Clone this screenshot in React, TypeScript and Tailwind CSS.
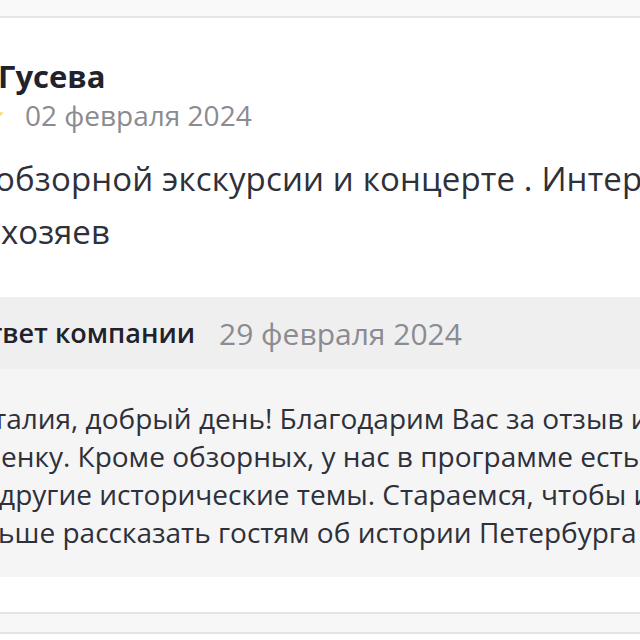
const font = { fontFamily: '"Open Sans", "Noto Sans", sans-serif' }

const replyLines = [
  { text: 'талия, добрый день! Благодарим Вас за отзыв и оценку', cls: '-ml-[7px]' },
  { text: 'енку. Кроме обзорных, у нас в программе есть экскурсии', cls: 'ml-[1px]' },
  { text: 'и другие исторические темы. Стараемся, чтобы их было', cls: '-ml-[26px]' },
  { text: 'льше рассказать гостям об истории Петербурга и его жителей', cls: '-ml-[18px]' },
]

function Star() {
  return (
    <svg width="22" height="22" viewBox="0 0 24 24" className="shrink-0">
      <path
        d="M12 2.5l2.9 6.1 6.6.8-4.9 4.6 1.3 6.6L12 17.3l-5.9 3.3 1.3-6.6-4.9-4.6 6.6-.8z"
        fill="#f8d96a"
      />
    </svg>
  )
}

export default function App() {
  return (
    <div className="h-[640px] w-[640px] overflow-hidden bg-white" style={font}>
      <div className="h-[18px] border-b-2 border-[#e6e6e6] bg-[#f9f9f9]" />

      <div className="flex flex-col pt-[40px]">
        <p className="-ml-[2px] whitespace-nowrap text-[31px] leading-[36px] font-bold text-[#21222b]">
          Гусева
        </p>
        <div className="mt-[5px] flex items-center gap-[19px] -ml-[16px]">
          <Star />
          <span className="whitespace-nowrap text-[28px] leading-[32px] text-[#8b8b90]">
            02 февраля 2024
          </span>
        </div>

        <div className="mt-[21px] flex flex-col text-[33px] leading-[53px] text-[#2e303a]">
          <p className="-ml-[5px] whitespace-nowrap tracking-[0.15px]">обзорной экскурсии и концерте . Интересно</p>
          <p className="ml-[1px] whitespace-nowrap">хозяев</p>
        </div>
      </div>

      <div className="mt-[39px] flex h-[72px] items-center gap-[24px] bg-[#efeff0]">
        <span className="-ml-[28px] whitespace-nowrap text-[27px] font-semibold text-[#21222b]">ответ компании</span>
        <span className="whitespace-nowrap text-[30px] text-[#8b8b90]">29 февраля 2024</span>
      </div>

      <div className="flex h-[208px] flex-col bg-[#f5f5f6] pt-[30px] text-[28px] leading-[38px] text-[#2e303a]">
        {replyLines.map((line, i) => (
          <p key={i} className={`whitespace-nowrap ${line.cls}`}>
            {line.text}
          </p>
        ))}
      </div>

      <div className="h-[35px] bg-white" />
      <div className="h-[22px] border-y-2 border-[#e4e4e4] bg-[#f7f7f7]" />
    </div>
  )
}
